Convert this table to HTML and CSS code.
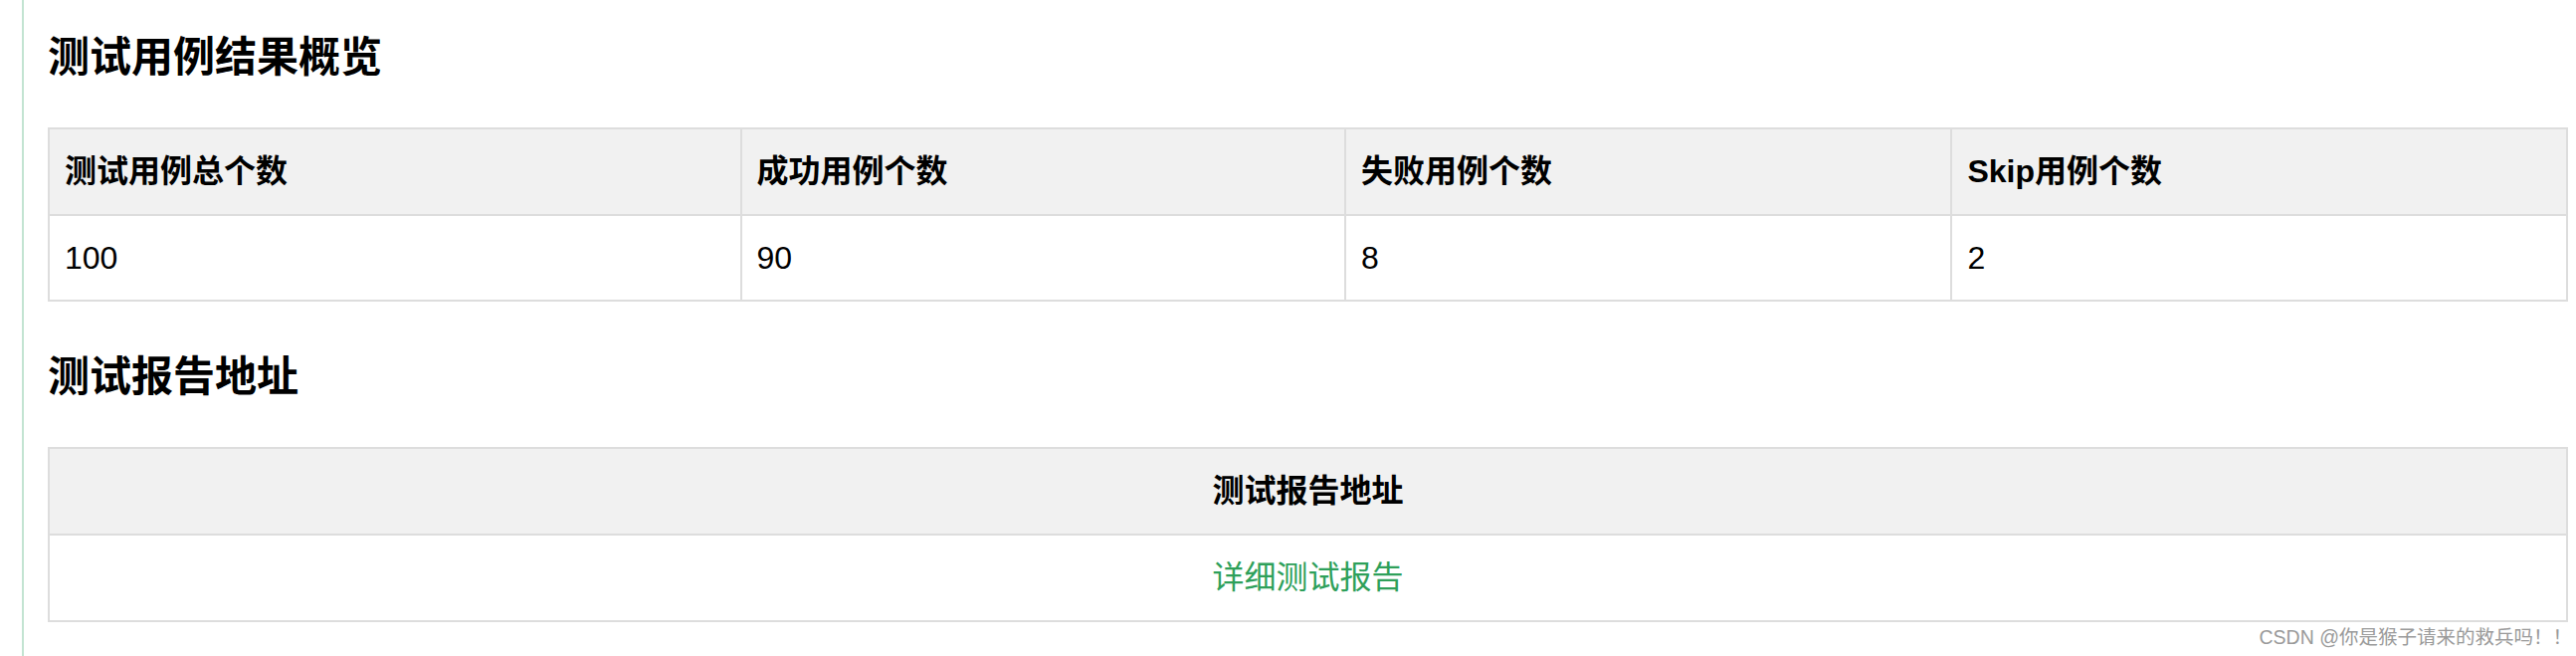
FILE: index.html
```html
<!DOCTYPE html>
<html lang="zh-CN">
<head>
<meta charset="utf-8">
<title>测试用例结果概览</title>
<link rel="stylesheet" href="styles.css">
</head>
<body>
<div class="page">
  <h2 class="section-title">测试用例结果概览</h2>
  <table class="data-table">
    <colgroup>
      <col class="c1"><col class="c2"><col class="c3"><col class="c4">
    </colgroup>
    <thead>
      <tr><th>测试用例总个数</th><th>成功用例个数</th><th>失败用例个数</th><th>Skip用例个数</th></tr>
    </thead>
    <tbody>
      <tr><td>100</td><td>90</td><td>8</td><td>2</td></tr>
    </tbody>
  </table>
  <h2 class="section-title next">测试报告地址</h2>
  <table class="data-table centered">
    <thead>
      <tr><th>测试报告地址</th></tr>
    </thead>
    <tbody>
      <tr><td class="link-cell"><a class="report-link" href="#">详细测试报告</a></td></tr>
    </tbody>
  </table>
</div>
<div class="watermark">CSDN @你是猴子请来的救兵吗！！</div>
</body>
</html>
```
FILE: styles.css
```css
html, body {
  margin: 0;
  padding: 0;
  background: #ffffff;
}
body {
  position: relative;
  min-height: 100vh;
  font-family: "Liberation Sans", Arial, "Noto Sans CJK SC", sans-serif;
  color: #000;
}
.page {
  margin-left: 22px;
  border-left: 2px solid #c3e4d2;
  padding: 29px 8px 0 24px;
  min-height: 659px;
  box-sizing: border-box;
}
.section-title {
  margin: 0 0 41px;
  font-family: "Liberation Sans", "Noto Sans CJK SC", sans-serif;
  font-weight: 700;
  font-size: 42px;
  line-height: 58px;
}
.section-title.next {
  margin-top: 47px;
}
.data-table {
  width: 100%;
  border-collapse: collapse;
  font-size: 32px;
  line-height: 36px;
}
.data-table .c1 { width: 27.48%; }
.data-table .c2 { width: 24.0%; }
.data-table .c3 { width: 24.08%; }
.data-table .c4 { width: 24.44%; }
.data-table th,
.data-table td {
  border: 2px solid #dddddd;
  padding: 24px 15px 24px;
  text-align: left;
  font-family: "Liberation Sans", "Noto Sans CJK SC", sans-serif;
}
.data-table th {
  background: #f1f1f1;
  font-weight: 700;
  padding-bottom: 25px;
}
.data-table td {
  background: #ffffff;
  font-weight: 400;
}
.data-table .link-cell {
  padding-bottom: 25px;
}
.data-table.centered th,
.data-table.centered td {
  text-align: center;
}
.report-link {
  color: #2ea05a;
  text-decoration: none;
}
.watermark {
  position: absolute;
  right: 4px;
  bottom: 8px;
  font-family: "Liberation Sans", "Noto Sans CJK SC", sans-serif;
  font-size: 19.5px;
  line-height: 22px;
  color: #9a9a9a;
}
```
